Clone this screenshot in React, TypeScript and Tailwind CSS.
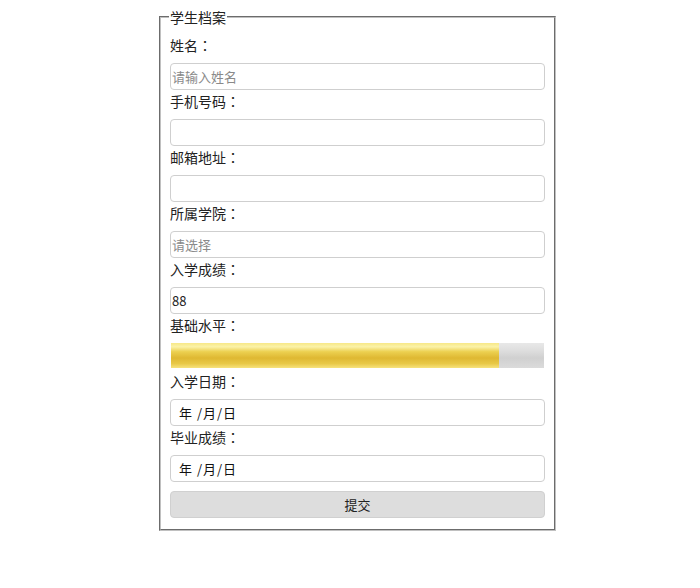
import React from "react";

const font = { fontFamily: '"Noto Sans CJK SC", "Noto Sans", sans-serif' };

function Label({ text, className = "" }: { text: string; className?: string }) {
  return (
    <div className={`text-[14px] leading-[20px] text-[#222] ${className}`}>
      {text}
      <span style={{ fontFamily: '"Noto Sans CJK TC", sans-serif' }}>：</span>
    </div>
  );
}

function Box({ children, className = "" }: { children?: React.ReactNode; className?: string }) {
  return (
    <div
      className={`mt-[8px] h-[27px] rounded-[4px] border border-[#cfcfcf] bg-white flex items-center ${className}`}
    >
      {children}
    </div>
  );
}

function DateText() {
  return (
    <span className="pl-[8px] text-[13px] text-[#111] tracking-[1px]">年 /月/日</span>
  );
}

export default function App() {
  return (
    <div className="w-[700px] h-[588px] bg-white" style={font}>
      <fieldset className="ml-[159px] mt-[8px] w-[397px] border-2 [border-style:groove] border-[#c0c0c0] px-[9px] pb-[11px]">
        <legend className="text-[14px] leading-[18px] text-[#222] px-[1px] ml-[-1px]">学生档案</legend>
        <Label className="mt-[9px]" text="姓名" />
        <Box>
          <span className="pl-[1px] text-[13px] text-[#8a8a8a]">请输入姓名</span>
        </Box>
        <Label className="mt-[1px]" text="手机号码" />
        <Box />
        <Label className="mt-[1px]" text="邮箱地址" />
        <Box />
        <Label className="mt-[1px]" text="所属学院" />
        <Box>
          <span className="pl-[1px] text-[13px] text-[#8a8a8a]">请选择</span>
        </Box>
        <Label className="mt-[1px]" text="入学成绩" />
        <Box>
          <span className="pl-[1px] text-[13px] text-[#222]">88</span>
        </Box>
        <Label className="mt-[1px]" text="基础水平" />
        <div className="mt-[8px] h-[25px] ml-[1px] mr-[1px] flex">
          <div className="h-full w-[328px] bg-[linear-gradient(to_bottom,#f7e888_0%,#fbf2a8_15%,#ecd050_35%,#dfb832_60%,#e8c846_82%,#f7e27c_100%)]" />
          <div className="h-full flex-1 bg-[linear-gradient(to_bottom,#e8e8e8_0%,#dedede_30%,#d0d0d0_60%,#dbdbdb_100%)]" />
        </div>
        <Label className="mt-[3px]" text="入学日期" />
        <Box>
          <DateText />
        </Box>
        <Label className="mt-[1px]" text="毕业成绩" />
        <Box>
          <DateText />
        </Box>
        <div className="mt-[9px] h-[27px] rounded-[4px] border border-[#d0d0d0] bg-[#dddddd] flex items-center justify-center text-[13px] text-[#222]">
          提交
        </div>
      </fieldset>
    </div>
  );
}
